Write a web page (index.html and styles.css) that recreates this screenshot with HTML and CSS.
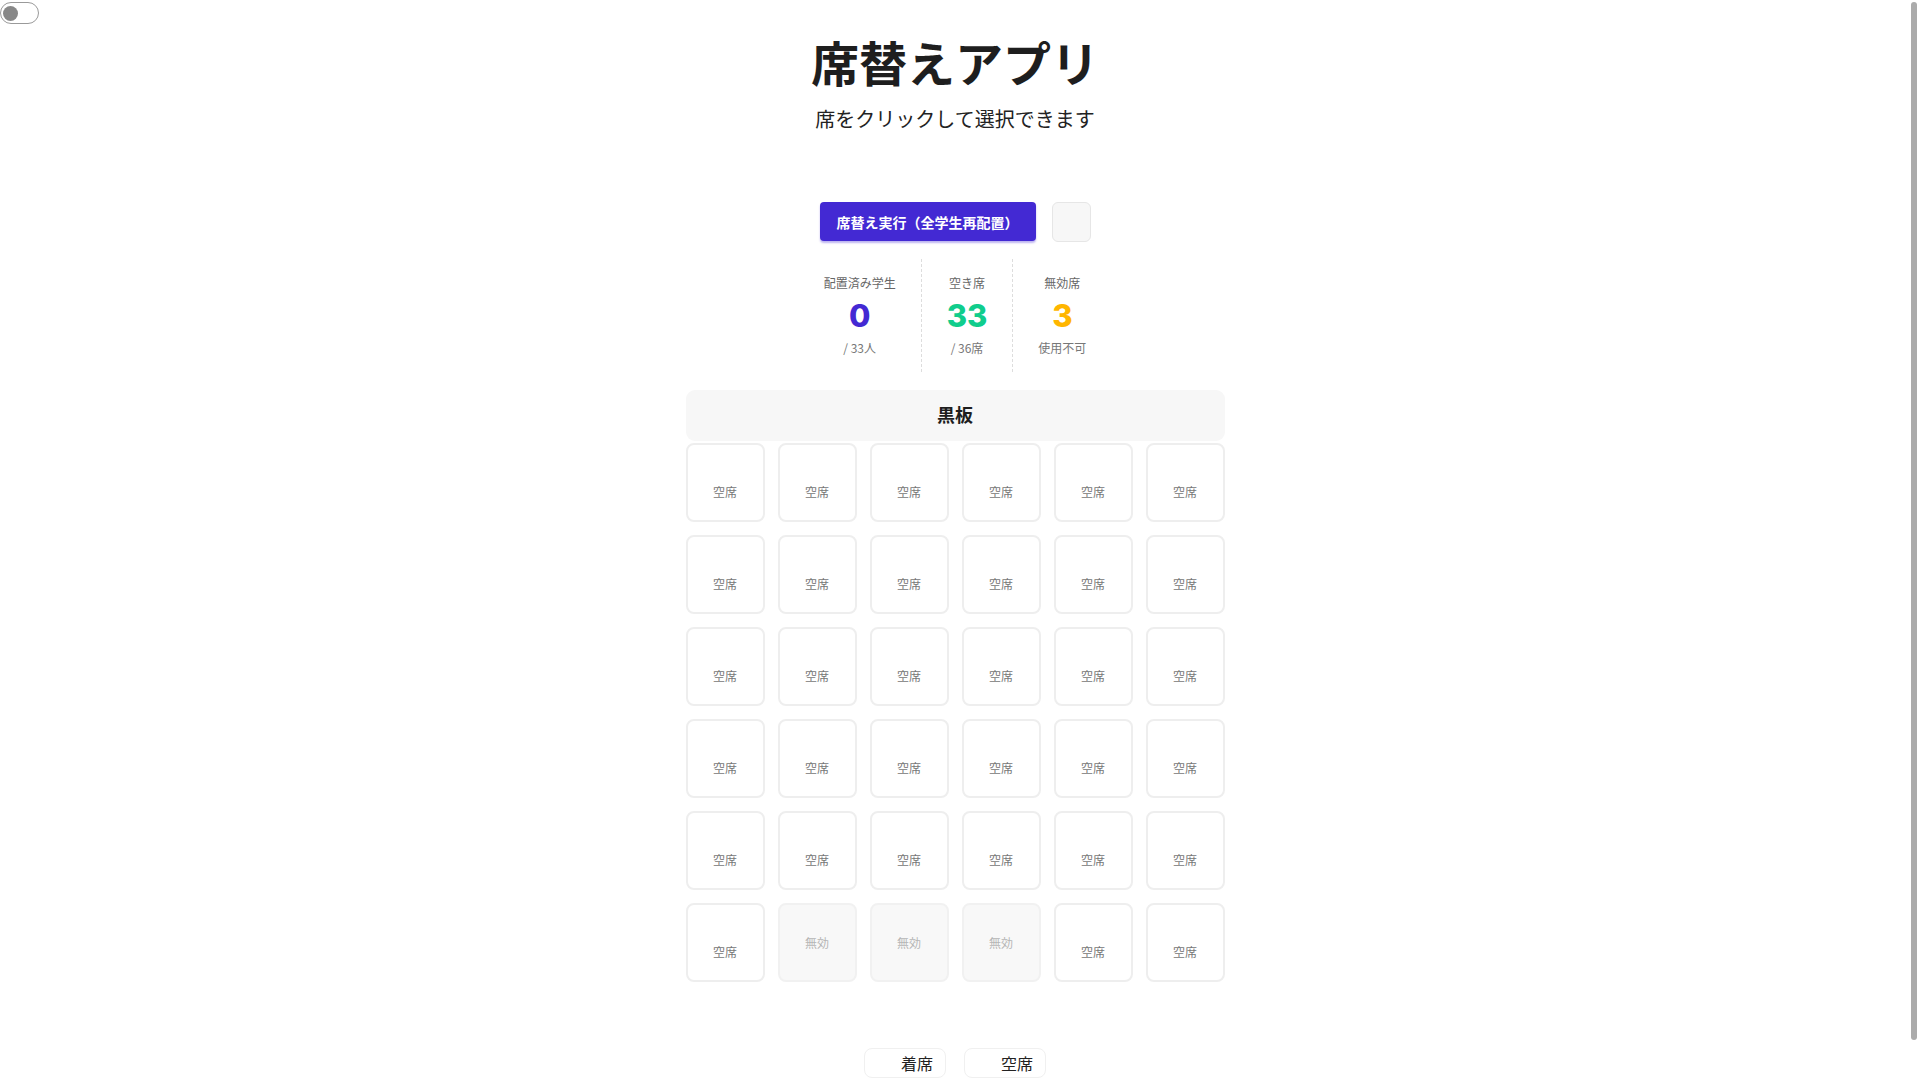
FILE: index.html
```html
<!DOCTYPE html>
<html lang="ja">
<head>
<meta charset="utf-8">
<title>席替えアプリ</title>
<link rel="stylesheet" href="styles.css">
</head>
<body>
<div class="toggle"><span class="knob"></span></div>
<div class="scroll-thumb"></div>
<main class="app">
  <h1 class="title">席替えアプリ</h1>
  <p class="subtitle">席をクリックして選択できます</p>

  <div class="controls">
    <button class="btn-primary">席替え実行（全学生再配置）</button>
    <button class="btn-square"></button>
  </div>

  <div class="stats">
    <div class="stat">
      <div class="stat-label">配置済み学生</div>
      <div class="stat-value purple">0</div>
      <div class="stat-sub">/ 33人</div>
    </div>
    <div class="stat">
      <div class="stat-label">空き席</div>
      <div class="stat-value green">33</div>
      <div class="stat-sub">/ 36席</div>
    </div>
    <div class="stat">
      <div class="stat-label">無効席</div>
      <div class="stat-value amber">3</div>
      <div class="stat-sub">使用不可</div>
    </div>
  </div>

  <div class="board">黒板</div>

  <div class="grid">
    <div class="seat"><span class="name"></span><span class="label">空席</span></div>
    <div class="seat"><span class="name"></span><span class="label">空席</span></div>
    <div class="seat"><span class="name"></span><span class="label">空席</span></div>
    <div class="seat"><span class="name"></span><span class="label">空席</span></div>
    <div class="seat"><span class="name"></span><span class="label">空席</span></div>
    <div class="seat"><span class="name"></span><span class="label">空席</span></div>

    <div class="seat"><span class="name"></span><span class="label">空席</span></div>
    <div class="seat"><span class="name"></span><span class="label">空席</span></div>
    <div class="seat"><span class="name"></span><span class="label">空席</span></div>
    <div class="seat"><span class="name"></span><span class="label">空席</span></div>
    <div class="seat"><span class="name"></span><span class="label">空席</span></div>
    <div class="seat"><span class="name"></span><span class="label">空席</span></div>

    <div class="seat"><span class="name"></span><span class="label">空席</span></div>
    <div class="seat"><span class="name"></span><span class="label">空席</span></div>
    <div class="seat"><span class="name"></span><span class="label">空席</span></div>
    <div class="seat"><span class="name"></span><span class="label">空席</span></div>
    <div class="seat"><span class="name"></span><span class="label">空席</span></div>
    <div class="seat"><span class="name"></span><span class="label">空席</span></div>

    <div class="seat"><span class="name"></span><span class="label">空席</span></div>
    <div class="seat"><span class="name"></span><span class="label">空席</span></div>
    <div class="seat"><span class="name"></span><span class="label">空席</span></div>
    <div class="seat"><span class="name"></span><span class="label">空席</span></div>
    <div class="seat"><span class="name"></span><span class="label">空席</span></div>
    <div class="seat"><span class="name"></span><span class="label">空席</span></div>

    <div class="seat"><span class="name"></span><span class="label">空席</span></div>
    <div class="seat"><span class="name"></span><span class="label">空席</span></div>
    <div class="seat"><span class="name"></span><span class="label">空席</span></div>
    <div class="seat"><span class="name"></span><span class="label">空席</span></div>
    <div class="seat"><span class="name"></span><span class="label">空席</span></div>
    <div class="seat"><span class="name"></span><span class="label">空席</span></div>

    <div class="seat"><span class="name"></span><span class="label">空席</span></div>
    <div class="seat disabled"><span class="label">無効</span></div>
    <div class="seat disabled"><span class="label">無効</span></div>
    <div class="seat disabled"><span class="label">無効</span></div>
    <div class="seat"><span class="name"></span><span class="label">空席</span></div>
    <div class="seat"><span class="name"></span><span class="label">空席</span></div>
  </div>

  <div class="legend">
    <div class="legend-item"><span class="swatch"></span><span class="legend-text">着席</span></div>
    <div class="legend-item"><span class="swatch"></span><span class="legend-text">空席</span></div>
  </div>
</main>
</body>
</html>
```

FILE: styles.css
```css
html, body {
  margin: 0;
  padding: 0;
  background: #ffffff;
}

body {
  font-family: "Noto Sans CJK JP", "Noto Sans", sans-serif;
  color: #222222;
}

.toggle {
  position: absolute;
  left: 0;
  top: 2px;
  width: 37px;
  height: 20px;
  border: 1.5px solid #9a9a9a;
  border-radius: 12px;
  box-sizing: content-box;
  background: #ffffff;
}

.toggle .knob {
  position: absolute;
  left: 2px;
  top: 2.5px;
  width: 15px;
  height: 15px;
  border-radius: 50%;
  background: #888888;
}

.scroll-thumb {
  position: fixed;
  right: 3px;
  top: 2px;
  width: 6px;
  height: 1038px;
  border-radius: 3px;
  background: #ababab;
}

.app {
  display: flex;
  flex-direction: column;
  align-items: center;
  padding-right: 10px;
  padding-bottom: 40px;
}

.title {
  margin: 32px 0 0;
  font-size: 48px;
  line-height: 58px;
  font-weight: 700;
  color: #1e1e1e;
}

.subtitle {
  margin: 15px 0 0;
  font-size: 20px;
  line-height: 28px;
  color: #222222;
}

.controls {
  display: flex;
  gap: 16px;
  margin-top: 69px;
}

.btn-primary {
  height: 39px;
  padding: 0 17px;
  border: none;
  border-radius: 4px;
  background: #4329d3;
  color: #ffffff;
  font-family: inherit;
  font-size: 14px;
  font-weight: 700;
  box-shadow: 0 2px 2px rgba(67, 41, 211, 0.35);
  cursor: pointer;
}

.btn-square {
  width: 39px;
  height: 40px;
  border: 1px solid #e6e6e6;
  border-radius: 6px;
  background: #f7f7f7;
}

.stats {
  display: flex;
  margin-top: 17px;
}

.stat {
  display: flex;
  flex-direction: column;
  align-items: center;
  padding: 15px 25px 15px;
}

.stat + .stat {
  border-left: 1px dashed #dddddd;
}

.stat-label {
  font-size: 12px;
  line-height: 18px;
  color: #666666;
}

.stat-value {
  margin-top: 5px;
  font-family: "Inter", "Noto Sans", sans-serif;
  font-size: 31px;
  line-height: 38px;
  font-weight: 800;
}

.stat-sub {
  margin-top: 4px;
  font-size: 12px;
  line-height: 18px;
  color: #777777;
}

.purple { color: #4329d3; }
.green { color: #10cd8c; }
.amber { color: #ffb600; }

.board {
  margin-top: 18px;
  width: 539px;
  height: 51px;
  box-sizing: border-box;
  padding-bottom: 3px;
  display: flex;
  align-items: center;
  justify-content: center;
  background: #f7f7f7;
  border-radius: 9px;
  font-size: 18px;
  font-weight: 700;
  color: #1e1e1e;
}

.grid {
  margin-top: 2px;
  display: grid;
  grid-template-columns: repeat(6, 79px);
  grid-auto-rows: 79px;
  gap: 13px;
}

.seat {
  box-sizing: border-box;
  border: 2px solid #eeeeee;
  border-radius: 8px;
  background: #ffffff;
  display: flex;
  flex-direction: column;
  align-items: center;
  justify-content: center;
  gap: 4px;
}

.seat .name {
  display: block;
  height: 14px;
}

.seat .label {
  font-size: 12px;
  line-height: 17px;
  color: #777777;
}

.seat.disabled {
  background: #f8f8f8;
  border-color: #f1f1f1;
}

.seat.disabled .label {
  color: #b5b5b5;
}

.legend {
  display: flex;
  gap: 18px;
  margin-top: 66px;
}

.legend-item {
  display: flex;
  align-items: center;
  gap: 10px;
  height: 30px;
  box-sizing: border-box;
  padding: 0 12px 0 10px;
  border: 1px solid #f0f0f0;
  border-radius: 8px;
}

.swatch {
  width: 16px;
  height: 16px;
  border-radius: 4px;
  background: #ffffff;
}

.legend-text {
  font-size: 16px;
  line-height: 26px;
  color: #222222;
}
```
